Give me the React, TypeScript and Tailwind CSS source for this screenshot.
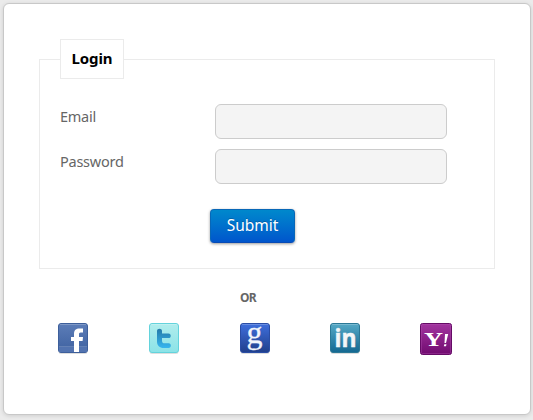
import type { ReactNode } from "react";

function Field({ label, type }: { label: string; type: string }) {
  return (
    <label className="flex h-[35px]">
      <span className="w-[155px] pt-[2px] text-[14.5px] leading-5 tracking-[-0.25px] text-[#666]">{label}</span>
      <input type={type} className="h-[35px] w-[232px] rounded-[6px] border border-[#ccc] bg-[#f4f4f4] px-2 outline-none" />
    </label>
  );
}

function Tile({ id, top, bottom, edge, children }: { id: string; top: string; bottom: string; edge: string; children: ReactNode }) {
  return (
    <svg width="32" height="32" viewBox="0 0 32 32" className="block shrink-0 overflow-visible">
      <defs>
        <linearGradient id={id} x2="0" y2="1">
          <stop stopColor={top} />
          <stop offset="1" stopColor={bottom} />
        </linearGradient>
      </defs>
      <rect x="0.5" y="1.5" width="29" height="29.5" rx="2.5" fill="#000" opacity="0.13" />
      <rect x="0.5" y="0.5" width="29" height="29" rx="2.5" fill={`url(#${id})`} stroke={edge} />
      <path d="M2 1.5h26" stroke="#fff" opacity="0.22" />
      {children}
    </svg>
  );
}

function Facebook() {
  return (
    <Tile id="fb" top="#5c7db8" bottom="#3e61a0" edge="#3d5f9b">
      <rect x="1" y="24" width="28" height="5" fill="#5273b0" />
      <path d="M1 23.5h28" stroke="#7892c0" opacity="0.6" />
      <path d="M16 29V18h-3v-4h3v-3c0-3.800 2-5.500 5.600-5.500H25v4h-2.200c-1.500 0-1.800.7-1.800 2V14h4l-.4 4H21v11z" fill="#fff" />
    </Tile>
  );
}

function Twitter() {
  return (
    <Tile id="tw" top="#b0eded" bottom="#8be3e7" edge="#63d3dc">
      <defs>
        <linearGradient id="bird" x2="0" y2="1">
          <stop stopColor="#257aa9" />
          <stop offset="1" stopColor="#36b6ef" />
        </linearGradient>
      </defs>
      <path d="M8 8c0-3 5-3 5 0v2.400h6.500c3 0 3 4.600 0 4.600H13v2.500c0 2 .8 2.800 2.800 2.800h3.800c3 0 3 4.700 0 4.700h-4.800C10.500 25 8 22.500 8 18.500z" fill="url(#bird)" />
    </Tile>
  );
}

function Google() {
  return (
    <Tile id="go" top="#3f6fdd" bottom="#203f8b" edge="#2a4da5">
      <text x="14.500" y="20" textAnchor="middle" fontFamily="Liberation Serif, serif" fontSize="32" fill="#f2f5fb" stroke="#f2f5fb" strokeWidth="0.3">g</text>
    </Tile>
  );
}

function LinkedIn() {
  return (
    <Tile id="li" top="#55a9c6" bottom="#146891" edge="#2b7896">
      <text x="4.500" y="24" fontFamily="Open Sans, sans-serif" fontWeight="700" fontSize="25" textLength="22" lengthAdjust="spacingAndGlyphs" fill="#f3f6f7" stroke="#f3f6f7" strokeWidth="0.5">in</text>
    </Tile>
  );
}

function Yahoo() {
  return (
    <svg width="32" height="32" viewBox="0 0 32 32" className="block shrink-0">
      <defs>
        <linearGradient id="ya" x2="0" y2="1">
          <stop stopColor="#a2359f" />
          <stop offset="1" stopColor="#710b70" />
        </linearGradient>
      </defs>
      <rect x="0.5" y="0.5" width="31" height="31" rx="2" fill="url(#ya)" stroke="#650b66" />
      <rect x="1.500" y="1.500" width="29" height="29" rx="1" fill="none" stroke="#b457b1" opacity="0.35" />
      <text x="4" y="23" fontFamily="Liberation Serif, serif" fontWeight="700" fontSize="19" textLength="19" lengthAdjust="spacingAndGlyphs" fill="#fff">Y</text>
      <path d="M25 11h3.200l-2.200 9h-1.500zM24.300 21.300h2.200l-.5 2h-2.200z" fill="#fff" />
    </svg>
  );
}

export default function App() {
  return (
    <main className="h-[420px] bg-[#ebebeb] pt-[3px] pl-[3px] font-['Noto_Sans',sans-serif]">
      <section className="h-[412px] w-[528px] rounded-[6px] border border-[#c8c8c8] bg-white px-[35px] pt-[35px] shadow-[0_1px_4px_rgba(0,0,0,0.12)]">
        <form onSubmit={(e) => e.preventDefault()}>
          <fieldset className="h-[230px] w-[456px] border border-[#ebebeb] px-5">
            <legend className="flex h-10 w-16 items-center justify-center border border-[#ebebeb] bg-white pb-0.5 text-[15px] font-bold tracking-[-0.1px] text-black">Login</legend>
            <div className="flex flex-col gap-2.5 pt-[25px]">
              <Field label="Email" type="email" />
              <Field label="Password" type="password" />
            </div>
            <button className="mt-[25px] ml-[150px] block h-[34px] w-[85px] rounded-[4px] border border-[#0867b7] border-b-[#084bb5] bg-linear-to-b from-[#0088cc] to-[#0055cc] text-[15.5px] leading-none text-white shadow-[0_1px_3px_rgba(0,0,0,0.4)] [text-shadow:0_-1px_0_rgba(0,0,0,0.2)]">Submit</button>
          </fieldset>
        </form>
        <p className="mt-[21px] w-[418px] text-center text-[12px] leading-4 font-bold tracking-[-0.7px] text-[#666]">OR</p>
        <nav className="mt-[17px] ml-[19px] flex w-[394px]">
          <span className="w-[91px]"><Facebook /></span>
          <span className="w-[91px]"><Twitter /></span>
          <span className="w-[90px]"><Google /></span>
          <span className="w-[90px]"><LinkedIn /></span>
          <Yahoo />
        </nav>
      </section>
    </main>
  );
}
